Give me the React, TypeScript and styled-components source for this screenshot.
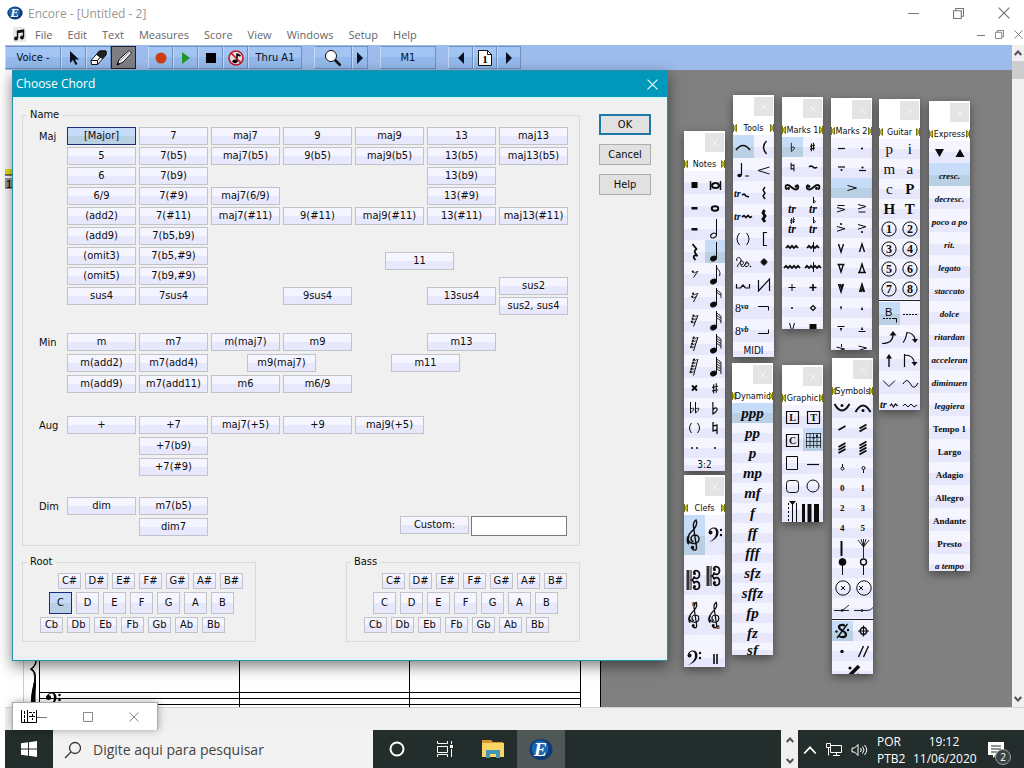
import React from "react";
import styled, { createGlobalStyle, css } from "styled-components";

const UI = `"Open Sans", "Noto Sans", sans-serif`;
const DIALOG = `"DejaVu Sans Condensed", "DejaVu Sans", sans-serif`;
const SERIF = `"Liberation Serif", serif`;

const Global = createGlobalStyle`
  *, *::before, *::after { box-sizing: border-box; }
  html, body { margin: 0; padding: 0; background: #fff; }
  body { overflow: hidden; }
  button, input { font: inherit; color: inherit; margin: 0; border-radius: 0; }
  svg { display: block; flex: none; }
`;

/* ---------- application frame ---------- */

const Screen = styled.div`
  position: relative;
  display: flex;
  flex-direction: column;
  height: 100vh;
  overflow: hidden;
  background: #fff;
  font-family: ${UI};
  font-size: 11px;
`;

const TitleBar = styled.header`
  display: flex;
  align-items: center;
  height: 26px;
  padding: 0 14px 0 7px;
  gap: 5px;
  color: #979797;
  font-size: 12px;
`;

const Spacer = styled.div`
  flex: 1;
`;

const PlainButton = styled.button`
  display: flex;
  align-items: center;
  justify-content: center;
  padding: 0;
  border: 0;
  background: transparent;
`;

const WindowButtons = styled.div`
  display: flex;
  gap: 34px;
`;

const MenuBar = styled.nav`
  display: flex;
  align-items: center;
  height: 19px;
  padding: 0 1px 2px 12px;
  gap: 15px;
  color: #666;
`;

const MenuItem = styled.button`
  padding: 0;
  border: 0;
  background: transparent;
  line-height: 16px;
`;

const MenuIcon = styled.span`
  margin-right: -7px;
`;

const MdiButtons = styled.div`
  display: flex;
  gap: 10px;
`;

const Middle = styled.div`
  flex: 1;
  display: flex;
  min-height: 0;
  padding-left: 5px;
`;

const Client = styled.div`
  flex: 1;
  display: flex;
  flex-direction: column;
  min-width: 0;
`;

const Toolbar = styled.div`
  display: flex;
  flex: none;
  height: 25px;
  gap: 12px;
  padding: 1px 0;
  background: #9dbcec;
`;

const ToolGroup = styled.div`
  display: flex;
`;

const ToolButton = styled.button<{ $w: number; $down?: boolean }>`
  display: flex;
  align-items: center;
  justify-content: center;
  width: ${(p) => p.$w}px;
  padding: 0;
  border: 1px solid #7290bd;
  border-left-color: #c5d9f7;
  background: linear-gradient(#a3c5f3 0 50%, #94baed 50%);
  color: #0a1020;
  font-family: ${DIALOG};
  font-size: 11px;
  ${(p) =>
    p.$down &&
    css`
      border-color: #222;
      background: #7d7f84;
    `}
`;

const Workspace = styled.div`
  flex: 1;
  display: flex;
  min-height: 0;
  overflow: hidden;
  background: #808080;
`;

const Sheet = styled.div`
  display: flex;
  flex-direction: column;
  justify-content: space-between;
  width: 596px;
  padding-top: 98px;
  overflow: hidden;
  border-right: 1px solid #000;
  background: #fff;
`;

const ScrollBar = styled.div`
  display: flex;
  flex-direction: column;
  align-items: stretch;
  width: 12px;
  background: #f0f0f0;
`;

const ScrollArrow = styled(PlainButton)`
  height: 16px;
`;

const ScrollThumb = styled.div`
  height: 18px;
  background: #cdcdcd;
`;

const StatusBar = styled.footer`
  flex: none;
  height: 23px;
  margin-left: 5px;
  border-top: 1px solid #d4d4d4;
  background: #f0f0f0;
`;

/* ---------- chord dialog ---------- */

const Dialog = styled.section`
  position: absolute;
  left: 12px;
  top: 70px;
  width: 656px;
  border: 1px solid #2b8ea6;
  background: #f0f0f0;
  box-shadow: 0 5px 14px rgba(0, 0, 0, 0.5);
  color: #0c0c0c;
  font-family: ${DIALOG};
  font-size: 11px;
  line-height: 14px;
`;

const DialogTitle = styled.div`
  display: flex;
  align-items: center;
  justify-content: space-between;
  height: 26px;
  padding: 0 9px 0 3px;
  background: #0099bc;
  color: #fff;
  font-family: ${UI};
  font-size: 12px;
`;

const DialogBody = styled.form`
  display: flex;
  gap: 19px;
  padding: 9px 9px 17px 8px;
  border: 1px solid #d9f6f8;
  border-top-width: 2px;
`;

const DialogMain = styled.div`
  display: flex;
  flex-direction: column;
  gap: 9px;
  width: 558px;
`;

const Box = styled.fieldset`
  min-width: 0;
  margin: 0;
  padding: 0 4px;
  border: 1px solid #dadadc;
`;

const Legend = styled.legend`
  margin: 0;
  padding: 0 3px;
`;

const Families = styled.div`
  padding: 5px 8px 9px 12px;
`;

const Family = styled.div<{ $gap: number }>`
  display: flex;
  align-items: flex-start;
  margin-top: ${(p) => p.$gap}px;
`;

const FamilyName = styled.span`
  flex: none;
  width: 28px;
  padding-top: 3px;
`;

/* Columns step by 6px; one chord button covers twelve of them. */
const ChordGrid = styled.div<{ $fine?: boolean }>`
  display: grid;
  grid-auto-columns: 3px;
  grid-auto-rows: ${(p) => (p.$fine ? 3 : 18)}px;
  gap: ${(p) => (p.$fine ? 2 : 3)}px 3px;
`;

const lilac = "linear-gradient(#f5f5ff 0 52%, #e8e8fc 52%)";
const picked = "linear-gradient(#c6dcf9 0 52%, #b9cfe4 52%)";

const keyLook = css<{ $on?: boolean }>`
  padding: 0;
  border: 1px solid ${(p) => (p.$on ? "#1b2b78" : "#c2c2cb")};
  background: ${(p) => (p.$on ? picked : lilac)};
  line-height: 14px;
  white-space: nowrap;
`;

const ChordButton = styled.button<{ $col: number; $row: number; $span: number; $on?: boolean }>`
  ${keyLook}
  grid-column: ${(p) => p.$col + 1} / span 12;
  grid-row: ${(p) => p.$row + 1} / span ${(p) => p.$span};
`;

const CustomRow = styled.div`
  display: flex;
  align-items: flex-start;
  gap: 2px;
  margin: 19px 0 0 auto;
`;

const CustomButton = styled.button`
  ${keyLook}
  width: 69px;
  height: 18px;
`;

const CustomInput = styled.input`
  width: 96px;
  height: 20px;
  border: 1px solid #7a7a7a;
  background: #fff;
`;

const Keyboards = styled.div`
  display: flex;
  justify-content: space-between;
`;

const Keys = styled.div`
  padding: 4px 8px 5px 13px;
`;

const KeyRow = styled.div<{ $indent: number }>`
  display: flex;
  gap: 4px;
  margin: 0 0 3px ${(p) => p.$indent}px;
`;

const Key = styled.button<{ $tall?: boolean; $on?: boolean }>`
  ${keyLook}
  width: 23px;
  height: ${(p) => (p.$tall ? 22 : 16)}px;
`;

const Actions = styled.div`
  display: flex;
  flex-direction: column;
  gap: 9px;
  padding-top: 6px;
`;

const Action = styled.button<{ $main?: boolean }>`
  width: 52px;
  height: 21px;
  padding: 0;
  border: ${(p) => (p.$main ? "2px solid #1f77a8" : "1px solid #adadad")};
  background: #e1e1e1;
`;

/* ---------- tool palettes ---------- */

const PaletteFrame = styled.section<{ $x: number; $y: number; $h: number }>`
  position: absolute;
  left: ${(p) => p.$x}px;
  top: ${(p) => p.$y}px;
  width: 41px;
  height: ${(p) => p.$h}px;
  overflow: hidden;
  background: #f3f3ff;
  box-shadow: 0 3px 9px rgba(0, 0, 0, 0.45);
  color: #0c0c0c;
`;

const PaletteHead = styled.div`
  display: flex;
  flex-direction: column;
  align-items: flex-end;
  height: 40px;
  padding-top: 2px;
  background: #fff;
`;

const PaletteClose = styled(PlainButton)`
  width: 19px;
  height: 19px;
  margin-right: 1px;
  background: #e4e4e4;
`;

const PaletteTitle = styled.div`
  display: flex;
  align-items: center;
  justify-content: space-between;
  width: 41px;
  height: 18px;
  padding-top: 6px;
  font-family: ${DIALOG};
  font-size: 9px;
  line-height: 12px;
  white-space: nowrap;
`;

const TitleText = styled.span`
  margin: 0 -3px;
`;

const Cells = styled.div`
  display: flex;
  flex-wrap: wrap;
`;

const Cell = styled.button<{ $h: number; $wide?: boolean; $on?: boolean }>`
  display: flex;
  align-items: center;
  justify-content: center;
  flex: 0 0 ${(p) => (p.$wide ? "100%" : "50%")};
  height: ${(p) => p.$h}px;
  min-width: 0;
  padding: 0;
  overflow: hidden;
  border: 0;
  background: ${(p) => (p.$on ? picked : "linear-gradient(#f5f5ff 0 50%, #e8e8fc 50%)")};
`;

const Divider = styled.div`
  flex: 0 0 100%;
  height: 3px;
  border-top: 1px solid #f5f5ff;
  border-bottom: 1px solid #f5f5ff;
  background: #222;
`;

type Tone = "dyn" | "words" | "tempo" | "type" | "heavy" | "small" | "ui";
const tones: Record<Tone, ReturnType<typeof css>> = {
  dyn: css`font: italic bold 15px/18px ${SERIF};`,
  words: css`padding-top: 3px; font: italic bold 9px/14px ${SERIF};`,
  tempo: css`padding-top: 3px; font: bold 9px/14px ${SERIF};`,
  type: css`font: 15px/18px ${SERIF};`,
  heavy: css`font: bold 15px/18px ${SERIF};`,
  small: css`font: bold 9px/12px ${SERIF};`,
  ui: css`font: 10px/12px ${DIALOG};`,
};

const Label = styled.span<{ $tone: Tone }>`
  display: flex;
  justify-content: safe center;
  width: 100%;
  padding: 0 2px;
  white-space: nowrap;
  ${(p) => tones[p.$tone]}
`;

/* ---------- taskbar ---------- */

const Taskbar = styled.div`
  display: flex;
  flex: none;
  height: 38px;
  margin-left: 5px;
  background: #222d2c;
  color: #fff;
`;

const TaskButton = styled(PlainButton)<{ $on?: boolean }>`
  width: 48px;
  background: ${(p) => (p.$on ? "#4f5857" : "transparent")};
`;

const Search = styled.label`
  display: flex;
  align-items: center;
  gap: 11px;
  width: 320px;
  padding: 2px 0 0 11px;
  background: #f2f2f2;
  color: #333;
`;

const SearchInput = styled.input`
  flex: 1;
  min-width: 0;
  padding: 0;
  border: 0;
  outline: 0;
  background: transparent;
  font-size: 14px;
  line-height: 20px;
  &::placeholder { color: #444; opacity: 1; }
`;

const PanelScroll = styled.div`
  display: flex;
  flex-direction: column;
  justify-content: space-between;
  align-items: center;
  width: 17px;
  padding: 6px 0 3px;
  background: #f0f0f0;
`;

const Tray = styled.div`
  display: flex;
  align-items: center;
  width: 226px;
  padding: 2px 0 0 5px;
  gap: 8px;
`;

const TrayText = styled.div<{ $w: number; $left?: boolean }>`
  width: ${(p) => p.$w}px;
  font-size: 12px;
  line-height: 17px;
  text-align: ${(p) => (p.$left ? "left" : "center")};
  white-space: nowrap;
`;

const Notice = styled(PlainButton)`
  position: relative;
  margin-left: 4px;
`;

const Badge = styled.span`
  position: absolute;
  left: 8px;
  top: 7px;
  width: 16px;
  height: 16px;
  border: 1px solid #9a9f9f;
  border-radius: 8px;
  background: #3b4444;
  color: #fff;
  font-size: 10px;
  line-height: 14px;
  text-align: center;
`;

const MiniWindow = styled.section`
  position: absolute;
  left: 12px;
  bottom: 38px;
  display: flex;
  align-items: center;
  width: 146px;
  height: 28px;
  padding: 0 18px 0 8px;
  border: 1px solid #aaa;
  border-bottom: 0;
  background: #fff;
  box-shadow: 0 0 8px rgba(0, 0, 0, 0.35);
`;

const MiniButtons = styled.div`
  display: flex;
  flex: 1;
  justify-content: space-between;
`;

/* ---------- drawings ---------- */

type ArtProps = { w?: number; h?: number; box?: string; children: React.ReactNode; sw?: number };
const Art = ({ w = 20, h = 20, box, children, sw = 1 }: ArtProps) => (
  <svg width={w} height={h} viewBox={box ?? `0 0 ${w} ${h}`} fill="none" stroke="currentColor" strokeWidth={sw} aria-hidden="true">
    {children}
  </svg>
);

const Cross = ({ size = 10, color = "#777" }) => (
  <svg width={size} height={size} viewBox="0 0 10 10" stroke={color} fill="none">
    <path d="M.5.5l9 9M9.500.5l-9 9" />
  </svg>
);

const Square = ({ size = 10, color = "#777" }) => (
  <svg width={size} height={size} viewBox="0 0 10 10" stroke={color} fill="none">
    <path d="M.5.5h9v9h-9z" />
  </svg>
);

const Restore = ({ size = 10 }) => (
  <svg width={size} height={size} viewBox="0 0 10 10" stroke="#777" fill="none">
    <path d="M.5 2.500h7v7h-7zM2.500 2.500v-2h7v7h-2" />
  </svg>
);

const Dash = ({ w = 10 }) => (
  <svg width={w} height={10} viewBox={`0 0 ${w} 10`} stroke="#777">
    <path d={`M0 5.500h${w}`} />
  </svg>
);

const Chevron = ({ up, color = "#505050", w = 8 }: { up?: boolean; color?: string; w?: number }) => (
  <svg width={w} height={w} viewBox="0 0 8 8" fill="none" stroke={color} strokeWidth={w > 8 ? 1 : 2}>
    <path d={up ? "M.7 6L4 2.500l3.300 3.500" : "M.7 2L4 5.500l3.300-3.500"} />
  </svg>
);

const Logo = ({ w, h }: { w: number; h: number }) => (
  <svg width={w} height={h} viewBox="0 0 24 24" preserveAspectRatio="none" aria-hidden="true">
    <ellipse cx="12" cy="12" rx="11.500" ry="11" fill="#0d3a78" />
    <ellipse cx="11" cy="11" rx="8.500" ry="8.500" fill="#1d66ae" />
    <text x="11.500" y="19" fill="#fff" textAnchor="middle" fontFamily="Liberation Serif, serif" fontStyle="italic" fontWeight="bold" fontSize="20">E</text>
  </svg>
);

const black = { fill: "currentColor", stroke: "none" };
const Dot = ({ x, y, r = 1.2 }: { x: number; y: number; r?: number }) => <circle cx={x} cy={y} r={r} {...black} />;

const Note = ({ flags = 0, open }: { flags?: number; open?: boolean }) => (
  <Art h={22}>
    <ellipse cx="8.500" cy="17.500" rx="3" ry="2.200" transform="rotate(-25 8.500 17.500)" fill={open ? "none" : "currentColor"} />
    <path d="M11.500 17V1" />
    {Array.from({ length: flags }, (_, i) => (
      <path key={i} d={flags === 1 ? "M11.500 2c0 4 5 4 3 10" : `M11.500 ${2.500 + i * 2.400}c1 2.500 5 1.500 4.500 6`} />
    ))}
  </Art>
);

const Rest = ({ flags }: { flags: number }) => (
  <Art h={22}>
    <path d={`M14 ${8 - flags}L9.500 ${12 + flags * 1.500}`} />
    {Array.from({ length: flags }, (_, i) => (
      <g key={i}>
        <Dot x={8.500 - i * 0.8 + flags * 0.3} y={8.500 - flags + i * 3} r={1.100} />
        <path d={`M${8.500 - i * 0.8} ${9.500 - flags + i * 3}q2 1 4.500-1`} strokeWidth=".8" />
      </g>
    ))}
  </Art>
);

const Flat = ({ small }: { small?: boolean }) => (
  <Art w={small ? 7 : 9} h={small ? 11 : 15} box="0 0 8 14" sw={1.100}>
    <path d="M2.500 1v11c2-1 4-3 4-4.500S4 6 2.500 8" />
  </Art>
);

const TrillMark = ({ top }: { top?: string }) => (
  <Art h={20}>
    <text x="10" y="16" textAnchor="middle" {...black} fontFamily="Liberation Serif, serif" fontStyle="italic" fontWeight="bold" fontSize="12">tr</text>
    {top === "b" && <path d="M10.500 0v6c3-1 2-3 0-2" />}
    {top === "#" && <path d="M9.500 1v6M11.500 0v6M8 3.500l5-1M8 5.500l5-1" strokeWidth=".8" />}
  </Art>
);

const treble = "M8 29c1 3 5 3 4.500-1L9.500 8c-.5-4 1-6 2.500-7 1.500 3 .5 6-2 9s-6 5-6 9.500c0 3 3 5 6 5s5-2 5-4.500-2-4-4-4-4 1.500-4 3.500 1.500 3 2.500 3";
const Treble = ({ eight }: { eight?: "up" | "down" }) => (
  <Art w={eight ? 17 : 20} h={eight ? 32 : 36} box="0 0 20 36" sw={1.400}>
    <path d={treble} transform="translate(0 2)" />
    <path d="M5 19c-2 2-2 6 0 8" strokeWidth="2" />
    <Dot x={8.500} y={30.500} r={1.800} />
    {eight && (
      <text x={eight === "up" ? 7 : 12} y={eight === "up" ? 7 : 35} fontSize="8" fontWeight="bold" fontFamily="Liberation Serif, serif" {...black}>8</text>
    )}
  </Art>
);

const bassPath = "M3 6c0-3 2.500-4.500 5-4.500 3 0 4.500 2 4.500 5 0 4.500-4 7.500-9.500 10 5-3.500 7-6 7-10 0-2.500-1-4-2.500-4C5.500 2.500 4 4 4 6z";
const Bass = () => (
  <Art w={18} h={18}>
    <path d={bassPath} {...black} />
    <Dot x={4.500} y={6.500} r={2} />
    <Dot x={15} y={4} />
    <Dot x={15} y={9} />
  </Art>
);

const CClef = ({ drop = 0 }: { drop?: number }) => (
  <Art w={17} h={32} box={`1 ${-5 - drop} 17 32`} sw={1.700}>
    <path d="M3 1v20" strokeWidth="3" stroke="#3c3030" />
    <path d="M6 1v20" strokeWidth="1" />
    <path d="M8.500 4c1-3.500 6-3 6 1.500s-5 5-5.500 2c0 2 0 2.500-2 3.500 2 1 2 1.500 2 3.500.5-3 5.500-2.500 5.500 2s-5 5-6 1.500" />
    <Dot x={9.500} y={4.500} r={1.500} />
    <Dot x={9.500} y={17.500} r={1.500} />
  </Art>
);

const wave = (n: number, x = 2, y = 10) => `M${x} ${y}` + "l2-2.200 2 2.200".repeat(n);
const Mordent = ({ n, bar }: { n: number; bar?: boolean }) => (
  <Art w={20} sw={1.800}>
    <path d={wave(n, 10 - n * 2, 11)} />
    {bar && <path d="M10.500 5v10" strokeWidth="1" />}
  </Art>
);

const Lines = ({ d, sw = 1, w = 20, h = 20, dots = [] as number[][], children }: { d: string; sw?: number; w?: number; h?: number; dots?: number[][]; children?: React.ReactNode }) => (
  <Art w={w} h={h} sw={sw}>
    <path d={d} />
    {dots.map(([x, y, r], i) => (
      <Dot key={i} x={x} y={y} r={r} />
    ))}
    {children}
  </Art>
);

const Fill = ({ d, w = 20, h = 20 }: { d: string; w?: number; h?: number }) => (
  <Art w={w} h={h}>
    <path d={d} {...black} />
  </Art>
);

const Ringed = ({ n }: { n: string }) => (
  <Art w={18} h={18}>
    <circle cx="9" cy="9" r="7.100" />
    <text x="9" y="13" textAnchor="middle" fontSize="12" fontWeight="bold" fontFamily="Liberation Serif, serif" {...black}>{n}</text>
  </Art>
);

const Boxed = ({ n }: { n: string }) => (
  <Art w={16} h={16}>
    <path d="M2.500 2.500h12v12h-12z" strokeWidth="1.200" />
    <text x="8.500" y="12" textAnchor="middle" fontSize="10" fontWeight="bold" fontFamily="Liberation Serif, serif" {...black}>{n}</text>
  </Art>
);

/* ---------- palette contents ---------- */

type Item = {
  name: string;
  art?: React.ReactNode;
  text?: string;
  tone?: Tone;
  h: number;
  wide?: boolean;
  on?: boolean;
  rule?: boolean;
};

const art = (h: number, name: string, node: React.ReactNode, on = false): Item => ({ name, art: node, h, on });
const txt = (h: number, text: string, tone: Tone, wide = false, on = false): Item => ({ name: text, text, tone, h, wide, on });
const rule: Item = { name: "rule", h: 3, rule: true };

const sharpPath = "M8.500 5v11M11.500 4v11M6.500 9l7-1.500M6.500 13l7-1.500";
const naturalPath = "M8 4v9l4-1M12 16V7L8 8";
const accent = "M5.500 7.500l9 2.500-9 2.500";

const notes: Item[] = [
  art(23, "breve rest", <Fill d="M7.500 9h6v6h-6z" />),
  art(23, "breve", <Lines d="M5.500 8v9M15.500 8v9" sw={1.500}><ellipse cx="10.500" cy="12.500" rx="3.500" ry="2.500" strokeWidth="2" /></Lines>),
  art(23, "whole rest", <Fill d="M7.500 11h6v2.500h-6z" />),
  art(23, "whole note", <Lines d=""><ellipse cx="10" cy="12.500" rx="3.200" ry="2.300" strokeWidth="2" /></Lines>),
  art(23, "half rest", <Fill d="M7.500 9h6v2.500h-6z" />),
  art(23, "half note", <Note open />),
  art(23, "quarter rest", <Lines sw={1.800} d="M8.500 2l4 5c-3 2-2 3.500 1 7-4-2-5 1-2 4" />),
  art(23, "quarter note", <Note />, true),
  ...[1, 2, 3, 4, 5].flatMap((n) => [art(23, `rest ${n}`, <Rest flags={n} />), art(23, `note ${n}`, <Note flags={n} />)]),
  art(20, "double sharp", <Lines sw={2} d="M8 7.500l5 5M13 7.500l-5 5" />),
  art(20, "sharp", <Art w={12} h={14} box="3 2 14 15" sw={1.300}><path d={sharpPath} /></Art>),
  art(20, "double flat", <Lines d="M6.500 4v11c5-4 4-6 0-4M11.500 4v11c5-4 4-6 0-4" />),
  art(20, "flat", <Flat />),
  art(20, "parentheses", <Lines d="M7.500 5q-4 5 0 10M13.500 5q4 5 0 10" />),
  art(20, "natural", <Lines sw={1.300} d={naturalPath} />),
  art(20, "two dots", <Lines d="" dots={[[8, 10, 1], [13, 10, 1]]} />),
  art(20, "dot", <Lines d="" dots={[[10, 10, 1]]} />),
  txt(14, "3:2", "ui", true),
];

const trText = <text x="1" y="14" {...black} fontSize="10" fontWeight="bold" fontStyle="italic" fontFamily="Liberation Serif, serif">tr</text>;
const Octave = ({ s }: { s: string }) => (
  <Art>
    <text x="2" y="14" {...black} fontSize="12" fontFamily="Liberation Serif, serif">8</text>
    <text x="8" y="11" {...black} fontSize="8" fontWeight="bold" fontStyle="italic" fontFamily="Liberation Serif, serif">{s}</text>
  </Art>
);

const tools: Item[] = [
  art(23, "slur", <Lines sw={1.600} d="M3 13q7-9 14 0" />, true),
  art(23, "bracket slur", <Lines sw={1.400} d="M12.500 4q-6 6 0 13" />),
  art(23, "tenuto note", <Lines d="M8.500 3v12M12 16h4" sw={1.200}><ellipse cx="6.500" cy="15.500" rx="2.200" ry="1.700" {...black} /></Lines>),
  art(23, "hairpin", <Lines d="M15.500 7L4 10.500 15.500 14" />),
  art(23, "trill", <Lines sw={1.600} d="M9 12l2-1 2 2 3 1">{trText}</Lines>),
  art(23, "arpeggio", <Lines sw={1.400} d="M11 4l-2 3 2 3-2 3 2 3" />),
  art(23, "long trill", <Lines sw={1.600} d="M9 11l2-1.500 2 2 2-2 2 2 2-1">{trText}</Lines>),
  art(23, "heavy arpeggio", <Lines sw={2.800} d="M10.500 4l-1.500 3 2 3-2 3 2 3" />),
  art(23, "parentheses", <Lines d="M6.500 4q-5 6 0 12M13.500 4q5 6 0 12" />),
  art(23, "bracket", <Lines sw={1.200} d="M13 3.500H9.500v13H13" />),
  art(23, "pedal", <Lines d="M4 9c-2-4 4-5 4-1s-5 4-3 7M8 13c3 0 3-4 1-4-3 0-2 6 1 5.500s2-5.500 4-4.500c3 1 2 5-1 4.500s0-5 2-3" dots={[[17.500, 14.500, 0.8]]} />),
  art(23, "pedal release", <Lines sw={1.700} d="M10 6.500v7M6.500 10h7M7.800 7.800l4.400 4.400M12.200 7.800l-4.400 4.400" />),
  art(23, "pedal line", <Lines d="M3.500 9v4h4l2.500-3 2.500 3h4V9" sw={1.200} />),
  art(23, "line", <Lines d="M4.500 5v11L15.500 4v12" sw={1.200} />),
  art(23, "8va", <Octave s="va" />),
  art(23, "8va line", <Lines d="M4 8.500h10.500v4" />),
  art(23, "8vb", <Octave s="vb" />),
  art(23, "8vb line", <Lines d="M4 12.500h10.500v-4" />),
  txt(17, "MIDI", "ui", true),
];

const turn = (flip: boolean) => (
  <Art sw={1.800}>
    <path transform={flip ? "matrix(-1 0 0 1 20 0)" : undefined} d="M5 12.500c-2-1-2-4.500.5-4.500 3 0 5 4.500 8 4.500 3.500 0 3.500-4 1-4.500" />
    <Dot x={flip ? 13.500 : 6.500} y={11.500} r={1.400} />
    <Dot x={flip ? 6 : 14} y={9.500} r={1.400} />
  </Art>
);

const marks1: Item[] = [
  art(20, "flat", <Flat small />, true),
  art(20, "sharp", <Art w={9} h={10} box="5 3 10 14" sw={1.500}><path d={sharpPath} /></Art>),
  art(20, "natural", <Art w={9} h={10} box="5 3 10 14" sw={1.500}><path d={naturalPath} /></Art>),
  art(20, "tilde", <Lines sw={1.600} d="M6 10q2-2 4 0t4 0" />),
  art(20, "turn", turn(false)),
  art(20, "inverted turn", turn(true)),
  art(20, "tr", <TrillMark />),
  art(20, "tr flat", <TrillMark top="b" />),
  art(20, "tr sharp", <TrillMark top="#" />),
  art(20, "tr natural", <TrillMark top="b" />),
  art(20, "short mordent", <Mordent n={3} />),
  art(20, "barred mordent", <Mordent n={3} bar />),
  art(20, "long mordent", <Mordent n={4} />),
  art(20, "long barred mordent", <Mordent n={4} bar />),
  art(20, "plus", <Lines d="M10 7v7M6.500 10.500h7" />),
  art(20, "heavy plus", <Lines sw={1.600} d="M10 7v7M6.500 10.500h7" />),
  art(20, "dot", <Lines d="" dots={[[10, 11, 1]]} />),
  art(20, "diamond", <Lines d="M10 8.500l2.500 2.500-2.500 2.500L7.500 11z" sw={1.200} />),
  art(20, "up bow", <Lines d="M7.500 6l2.500 9 2.500-9" />),
  art(20, "down bow", <Fill d="M6.500 7h7v5h-7z" />),
];

const wedge = (up: boolean, extra = "") => <Lines sw={1.400} d={(up ? "M7.500 14L10 6l2.500 8" : "M7.500 6l2.500 8 2.500-8") + extra} />;

const marks2: Item[] = [
  art(20, "tenuto", <Lines sw={1.200} d="M7 10.500h7" />),
  art(20, "staccato", <Lines d="" dots={[[10, 10.500, 1.100]]} />),
  art(20, "tenuto dot", <Lines sw={1.200} d="M7 9h7" dots={[[10.500, 12, 1.100]]} />),
  art(20, "dot tenuto", <Lines sw={1.200} d="M7 12.500h7" dots={[[10.500, 9.500, 1.100]]} />),
  { name: "accent", art: <Lines d={accent} />, h: 20, wide: true, on: true },
  art(20, "accent line", <Lines d="M6.500 7.500h7M6 9.500l8 2-8 2.500" />),
  art(20, "accent under line", <Lines d="M6 6.500l8 2-8 2.500M6.500 14h7" />),
  art(20, "accent dot", <Lines d="M6 8.500l8 2.200-8 2.500" dots={[[10, 6, 1.100]]} />),
  art(20, "accent under dot", <Lines d="M6 6.500l8 2.200-8 2.500" dots={[[10, 14, 1.100]]} />),
  art(20, "wedge down", wedge(false)),
  art(20, "wedge up", wedge(true)),
  art(20, "lined wedge down", wedge(false, "M6.500 6.500h7")),
  art(20, "lined wedge up", wedge(true, "M6 14.500h8")),
  art(20, "heavy wedge down", wedge(false, "M9 6l1.500 4 1-4")),
  art(20, "heavy wedge up", wedge(true, "M9 14l1.500-4 1 4")),
  art(20, "small wedge down", <Fill d="M8.800 8.500h2.400L10 12z" />),
  art(20, "small wedge up", <Fill d="M8.800 12h2.400L10 8.500z" />),
  art(20, "line wedge down", <Lines d="M6.500 8.500h7"><path d="M8.800 10h2.400L10 13.500z" {...black} /></Lines>),
  art(20, "line wedge up", <Lines d="M6.500 13.500h7"><path d="M8.800 12h2.400L10 8.500z" {...black} /></Lines>),
  art(20, "accent wedge", <Lines d="M5.500 9l8 2-8 2.500M10.500 6v3" />),
  art(20, "accent small", <Lines d="M6.500 8l8 2-8 2.500" />),
];

const guitar: Item[] = [
  txt(20, "p", "type"), txt(20, "i", "type"),
  txt(20, "m", "type"), txt(20, "a", "type"),
  txt(20, "c", "type"), txt(20, "P", "heavy"),
  txt(20, "H", "heavy"), txt(20, "T", "heavy"),
  ...["1", "2", "3", "4", "5", "6", "7", "8"].map((n) => art(20, n, <Ringed n={n} />)),
  rule,
  art(23, "barre", <Art><text x="6" y="12" {...black} fontSize="11" fontFamily="Liberation Sans, sans-serif">B</text><path d="M4 14.500h12" strokeDasharray="2 1" /><path d="M14 14.500h3.500v4" /></Art>, true),
  art(23, "dashes", <Lines d=""><path d="M3 10.500h15" strokeDasharray="2 1" /></Lines>),
  art(23, "bend", <Lines sw={1.200} d="M3 16.500q11 0 11-9"><path d="M10.500 8.500l3.500-4.500 3.500 4.500z" {...black} /></Lines>),
  art(23, "bend release", <Lines sw={1.200} d="M3 15.500c2-2 3-5 4-10 5 0 8 4 8 7"><path d="M12 12h6l-3 4z" {...black} /></Lines>),
  art(23, "prebend", <Lines sw={1.400} d="M10 17V7"><path d="M7 8.500L10 4l3 4.500z" {...black} /></Lines>),
  art(23, "prebend release", <Lines sw={1.200} d="M4.500 4v13M4.500 5q9 0 10 8"><path d="M11.500 12h6l-3 4z" {...black} /></Lines>),
  art(23, "dip", <Lines d="M4 7.500l6 6 6-6" />),
  art(23, "vibrato", <Lines d="M3 11q4-7 7.500 0t7.500-1" />),
  art(20, "tr line", <Lines sw={1.200} d="M11 12l1.500-2 2 3 2-3 2 2">{trText}</Lines>),
  art(20, "wavy line", <Lines d="M3 12l2-2 3 3 3-3 3 3 3-2" />),
];

const express: Item[] = [
  art(22, "down", <Fill d="M6 7h9l-4.500 8z" />),
  art(22, "up", <Fill d="M5.500 15h9L10 7z" />),
  txt(23, "cresc.", "words", true, true),
  ...["decresc.", "poco a po", "rit.", "legato", "staccato", "dolce", "ritardan", "acceleran", "diminuen", "leggiera"].map((t) => txt(23, t, "words", true)),
  ...["Tempo 1", "Largo", "Adagio", "Allegro", "Andante", "Presto"].map((t) => txt(23, t, "tempo", true)),
  txt(21, "a tempo", "words", true),
];

const clefs: Item[] = [
  art(40, "treble clef", <Treble />, true), art(40, "bass clef", <Bass />),
  art(40, "alto clef", <CClef drop={5} />), art(40, "tenor clef", <CClef drop={1} />),
  art(40, "treble 8va", <Treble eight="up" />), art(40, "treble 8vb", <Treble eight="down" />),
  art(46, "bass 8vb", <Bass />), art(46, "percussion clef", <Lines sw={1.600} d="M9 6v10M12 6v10" />),
];

const dynamics: Item[] = ["ppp", "pp", "p", "mp", "mf", "f", "ff", "fff", "sfz", "sffz", "fp", "fz", "sf"].map((t, i) => txt(i === 12 ? 14 : 20, t, "dyn", true, i === 0));

const graphic: Item[] = [
  art(23, "L", <Boxed n="L" />), art(23, "T", <Boxed n="T" />),
  art(23, "C", <Boxed n="C" />),
  art(23, "chord grid", <Lines w={18} h={20} sw={0.700} d="M2 3.500h15M2 7.500h15M2 11.500h15M2 15.500h15M2.500 3v15M6 3v15M9.500 3v15M13 3v15M16.500 3v15" dots={[[9.500, 8, 1.100], [13, 6, 1.100]]} />, true),
  art(23, "rectangle", <Lines w={16} h={16} d="M2.500 1.500h11v13h-11z" />),
  art(23, "line", <Lines d="M4 11.500h12" sw={1.200} />),
  art(23, "round rectangle", <Art w={16} h={16}><rect x="2.500" y="2.500" width="12" height="12" rx="3" /></Art>),
  art(23, "ellipse", <Art w={16} h={16}><circle cx="8" cy="8" r="6" /></Art>),
  { name: "line weight", h: 27, wide: true, art: <Art w={40} h={24}><path d="M5.500 4v18" strokeDasharray="2 2" /><path d="M6 2h7l-3.500 4z" {...black} /><path d="M9.500 4v20M13.500 4v20" /><path d="M20.500 5v19" strokeWidth="3" /><path d="M26.500 5v19" strokeWidth="4" /><path d="M33.500 5v19" strokeWidth="5" /></Art> },
];

const slashes = (n: number) => <Lines sw={1.800} d={Array.from({ length: n }, (_, i) => `M6.500 ${12 + (n - 1) * 1.500 - i * 3}l7-4`).join("")} />;

const symbols: Item[] = [
  art(20, "fermata below", <Lines sw={2} d="M2.500 6q7.500 13 15 0" dots={[[10, 7.500, 1.500]]} />),
  art(20, "fermata", <Lines sw={2} d="M2.500 14q7.500-13 15 0" dots={[[10, 12.500, 1.500]]} />),
  art(20, "slash", slashes(1)), art(20, "two slashes", slashes(2)),
  art(20, "three slashes", slashes(3)), art(20, "four slashes", slashes(4)),
  art(20, "thumb", <Lines d="M10.500 6v3" sw={1}><circle cx="10.500" cy="10.500" r="1.500" /></Lines>),
  art(20, "thumb below", <Lines d="M10.500 12v3" sw={1}><circle cx="10.500" cy="10" r="1.500" /></Lines>),
  ...["0", "1", "2", "3", "4", "5"].map((t) => txt(20, t, "small")),
  art(20, "stick", <Lines sw={2} d="M9.500 3v15" />),
  art(20, "brush", <Lines d="M10.500 8v12M10.500 9L5 2M10.500 9L8 1M10.500 9V1M10.500 9L13 1M10.500 9L16 2" sw={0.900} />),
  art(20, "mallet", <Lines d="M10.500 0v17" dots={[[10.500, 4, 3.800]]} />),
  art(20, "soft mallet", <Lines d="M10.500 7v10"><circle cx="10.500" cy="4" r="3" strokeWidth="1.400" /></Lines>),
  art(20, "drum centre", <Art><circle cx="11" cy="10" r="7.200" /><path d="M9 8l4 4M13 8l-4 4" /></Art>),
  art(20, "drum edge", <Art><circle cx="11" cy="10" r="7.200" /><path d="M6 8l4 4M10 8l-4 4" /></Art>),
  art(20, "rim open", <Lines d="M2 12.500h15M11 12l6-5" sw={0.900} dots={[[10, 12.500, 1.200]]} />),
  art(20, "rim closed", <Lines d="M1 12.500h13q4 0 6-3" sw={0.900} dots={[[9, 12.500, 1.200]]} />),
  rule,
  art(20, "segno", <Lines sw={2.200} d="M13 5c-2.500-2-6.500-1-6 1.500.5 3 7 3.500 7 7 0 3-4.500 3.500-7 1.500" dots={[[4.500, 10.500, 1.200], [16, 9, 1.200]]}><path d="M15.500 3L5 17" strokeWidth="1.300" /></Lines>, true),
  art(20, "coda", <Lines d="M10.500 4.500v11M5 10h11" sw={1.200}><ellipse cx="10.500" cy="10" rx="3.200" ry="3.500" strokeWidth="1.600" /></Lines>),
  art(20, "dot", <Lines d="" dots={[[10, 10.500, 1.700]]} />),
  art(20, "caesura", <Lines d="M5.500 16l5-11M10.500 16l5-11" sw={1.400} />),
  { name: "repeat bar", h: 20, wide: true, art: <Lines sw={3.500} d="M15 16L26 5" w={40} dots={[[17, 7, 1.600], [25, 14, 1.600]]} /> },
];

const Palette = ({ title, x, y, h, items }: { title: string; x: number; y: number; h: number; items: Item[] }) => (
  <PaletteFrame $x={x} $y={y} $h={h} aria-label={title}>
    <PaletteHead>
      <PaletteClose aria-label="Close"><Cross size={6} color="#fff" /></PaletteClose>
      <PaletteTitle>
        <svg width="4" height="8" viewBox="0 0 4 8" stroke="#77780c" fill="#c8c832"><path d="M3.500.5v7L.5 4zM.5 0v8" /></svg>
        <TitleText>{title}</TitleText>
        <svg width="4" height="8" viewBox="0 0 4 8" stroke="#77780c" fill="#c8c832"><path d="M.5.5v7L3.500 4zM3.500 0v8" /></svg>
      </PaletteTitle>
    </PaletteHead>
    <Cells>
      {items.map((it, i) =>
        it.rule ? (
          <Divider key={i} />
        ) : (
          <Cell key={i} type="button" $h={it.h} $wide={it.wide} $on={it.on} aria-label={it.name}>
            {it.art ?? <Label $tone={it.tone ?? "ui"}>{it.text}</Label>}
          </Cell>
        )
      )}
    </Cells>
  </PaletteFrame>
);

/* ---------- chord tables: [label, column step, row step] ---------- */

type Chord = [string, number, number];
const column = (c: number, names: (string | null)[], step: number): Chord[] =>
  names.flatMap((n, i) => (n ? [[n, c * 12, i * step] as Chord] : []));

const maj: Chord[] = [
  ...column(0, ["[Major]", "5", "6", "6/9", "(add2)", "(add9)", "(omit3)", "(omit5)", "sus4"], 4),
  ...column(1, ["7", "7(b5)", "7(b9)", "7(#9)", "7(#11)", "7(b5,b9)", "7(b5,#9)", "7(b9,#9)", "7sus4"], 4),
  ...column(2, ["maj7", "maj7(b5)", null, "maj7(6/9)", "maj7(#11)"], 4),
  ...column(3, ["9", "9(b5)", null, null, "9(#11)", null, null, null, "9sus4"], 4),
  ...column(4, ["maj9", "maj9(b5)", null, null, "maj9(#11)"], 4),
  ["11", 53, 25],
  ...column(5, ["13", "13(b5)", "13(b9)", "13(#9)", "13(#11)", null, null, null, "13sus4"], 4),
  ...column(6, ["maj13", "maj13(b5)", null, null, "maj13(#11)"], 4),
  ["sus2", 72, 30],
  ["sus2, sus4", 72, 34],
];
const min: Chord[] = [
  ...column(0, ["m", "m(add2)", "m(add9)"], 1),
  ...column(1, ["m7", "m7(add4)", "m7(add11)"], 1),
  ["m(maj7)", 24, 0], ["m9", 36, 0], ["m13", 60, 0],
  ["m9(maj7)", 30, 1], ["m11", 54, 1],
  ["m6", 24, 2], ["m6/9", 36, 2],
];
const aug: Chord[] = [
  ["+", 0, 0], ...column(1, ["+7", "+7(b9)", "+7(#9)"], 1),
  ["maj7(+5)", 24, 0], ["+9", 36, 0], ["maj9(+5)", 48, 0],
];
const dim: Chord[] = [["dim", 0, 0], ...column(1, ["m7(b5)", "dim7"], 1)];

const Chords = ({ list, fine }: { list: Chord[]; fine?: boolean }) => (
  <ChordGrid $fine={fine}>
    {list.map(([name, c, r]) => (
      <ChordButton key={name} type="button" $col={c} $row={r} $span={fine ? 4 : 1} $on={name === "[Major]"}>{name}</ChordButton>
    ))}
  </ChordGrid>
);

const letters = ["C", "D", "E", "F", "G", "A", "B"];
const Keyboard = ({ title, on }: { title: string; on?: string }) => (
  <Box>
    <Legend>{title}</Legend>
    <Keys>
      <KeyRow $indent={18}>{letters.map((l) => <Key key={l} type="button">{l}#</Key>)}</KeyRow>
      <KeyRow $indent={9}>{letters.map((l) => <Key key={l} type="button" $tall $on={l === on}>{l}</Key>)}</KeyRow>
      <KeyRow $indent={0}>{letters.map((l) => <Key key={l} type="button">{l}b</Key>)}</KeyRow>
    </Keys>
  </Box>
);

const ChordDialog = () => (
  <Dialog role="dialog" aria-label="Choose Chord">
    <DialogTitle>
      Choose Chord
      <PlainButton aria-label="Close"><Cross size={11} color="#fff" /></PlainButton>
    </DialogTitle>
    <DialogBody onSubmit={(e) => e.preventDefault()}>
      <DialogMain>
        <Box>
          <Legend>Name</Legend>
          <Families>
            <Family $gap={0}><FamilyName>Maj</FamilyName><Chords list={maj} fine /></Family>
            <Family $gap={18}><FamilyName>Min</FamilyName><Chords list={min} /></Family>
            <Family $gap={23}><FamilyName>Aug</FamilyName><Chords list={aug} /></Family>
            <Family $gap={21}>
              <FamilyName>Dim</FamilyName>
              <Chords list={dim} />
              <CustomRow>
                <CustomButton type="button">Custom:</CustomButton>
                <CustomInput aria-label="Custom" />
              </CustomRow>
            </Family>
          </Families>
        </Box>
        <Keyboards>
          <Keyboard title="Root" on="C" />
          <Keyboard title="Bass" />
        </Keyboards>
      </DialogMain>
      <Actions>
        <Action type="submit" $main>OK</Action>
        <Action type="button">Cancel</Action>
        <Action type="button">Help</Action>
      </Actions>
    </DialogBody>
  </Dialog>
);

const triRight = <Fill w={10} h={14} d="M2 1l6 6-6 6z" />;
const triLeft = <Fill w={10} h={14} d="M8 1L2 7l6 6z" />;

export default function App() {
  return (
    <>
      <Global />
      <Screen>
        <TitleBar>
          <Logo w={16} h={14} />
          <span>Encore - [Untitled - 2]</span>
          <Spacer />
          <WindowButtons>
            <PlainButton aria-label="Minimize"><Dash w={11} /></PlainButton>
            <PlainButton aria-label="Restore"><Restore size={11} /></PlainButton>
            <PlainButton aria-label="Close"><Cross size={12} /></PlainButton>
          </WindowButtons>
        </TitleBar>
        <MenuBar>
          <MenuIcon>
            <svg width="15" height="15" viewBox="0 0 15 15">
              <path d="M1 0h10l3 3v12H1z" fill="#e9e9e9" />
              <path d="M5.500 11V4l6-1v7M5.500 5.500l6-1" stroke="#111" strokeWidth="1.400" fill="none" />
              <circle cx="4" cy="11.500" r="1.900" fill="#111" /><circle cx="10" cy="10.500" r="1.900" fill="#111" />
            </svg>
          </MenuIcon>
          {["File", "Edit", "Text", "Measures", "Score", "View", "Windows", "Setup", "Help"].map((m) => <MenuItem key={m}>{m}</MenuItem>)}
          <Spacer />
          <MdiButtons>
            <PlainButton aria-label="Minimize document"><Dash w={8} /></PlainButton>
            <PlainButton aria-label="Restore document"><Restore size={9} /></PlainButton>
            <PlainButton aria-label="Close document"><Cross size={9} /></PlainButton>
          </MdiButtons>
        </MenuBar>
        <Middle>
          <Client>
            <Toolbar>
              <ToolGroup>
                <ToolButton $w={56}>Voice -</ToolButton>
                <ToolButton $w={25} aria-label="Select"><Fill w={16} h={16} d="M4 1v12l3-3 2.500 5 2-1L9 9.500h4z" /></ToolButton>
                <ToolButton $w={25} aria-label="Erase">
                  <svg width="18" height="16" viewBox="0 0 18 16" stroke="#111" strokeLinejoin="round"><path d="M1 10.500l8.500-9.500h6.500l-8.500 9.500z" fill="#fff" /><path d="M1 10.500h6.500v4H1.500zM7.500 10.500L16 1v4l-8.500 9.500z" fill="#fff" /><path d="M9.500 1H16v4l-3.500 3.500-6-4z" fill="#222" /></svg>
                </ToolButton>
                <ToolButton $w={25} $down aria-label="Pencil">
                  <svg width="18" height="18" viewBox="0 0 18 18" stroke="#111" fill="#fff"><path d="M2 16l2.500-6L14 1.500 16.500 4 8 13z" /><path d="M5 12L14.500 3" stroke="#777" /><path d="M2 16l1-2.500L4.500 15z" fill="#111" /></svg>
                </ToolButton>
              </ToolGroup>
              <ToolGroup>
                <ToolButton $w={25} aria-label="Record"><svg width="12" height="12"><circle cx="6" cy="6" r="5.500" fill="#cf3c15" /></svg></ToolButton>
                <ToolButton $w={25} aria-label="Play"><svg width="10" height="12"><path d="M1 0l8 6-8 6z" fill="#23962b" /></svg></ToolButton>
                <ToolButton $w={25} aria-label="Stop"><svg width="10" height="10"><path d="M0 0h10v10H0z" fill="#000" /></svg></ToolButton>
                <ToolButton $w={25} aria-label="Mute">
                  <svg width="16" height="16" viewBox="0 0 16 16" fill="none"><circle cx="8" cy="8" r="7" stroke="#c01822" strokeWidth="1.600" fill="#e9dce0" /><path d="M9 3.500V11M9 4l3.500 2" stroke="#000" strokeWidth="1.600" /><ellipse cx="7" cy="11.300" rx="2.600" ry="1.900" fill="#000" /><path d="M3 3l10 10" stroke="#c01822" strokeWidth="1.600" /></svg>
                </ToolButton>
                <ToolButton $w={54}>Thru A1</ToolButton>
              </ToolGroup>
              <ToolGroup>
                <ToolButton $w={38} aria-label="Zoom">
                  <svg width="18" height="18" viewBox="0 0 18 18" stroke="#111" fill="#fff"><path d="M10.500 10.500l6 6" strokeWidth="2.500" /><circle cx="7" cy="7" r="5.500" /></svg>
                </ToolButton>
                <ToolButton $w={16} aria-label="Zoom menu">{triRight}</ToolButton>
              </ToolGroup>
              <ToolGroup>
                <ToolButton $w={56}>M1</ToolButton>
              </ToolGroup>
              <ToolGroup>
                <ToolButton $w={25} aria-label="Previous page">{triLeft}</ToolButton>
                <ToolButton $w={24} aria-label="Page">
                  <svg width="14" height="16" viewBox="0 0 14 16"><path d="M.5.5h9l4 4v11H.5z" fill="#fff" stroke="#111" /><path d="M9.500.5v4h4" fill="none" stroke="#111" /><text x="7" y="13" textAnchor="middle" fontSize="11" fontFamily="Liberation Serif, serif" fontWeight="bold">1</text></svg>
                </ToolButton>
                <ToolButton $w={24} aria-label="Next page">{triRight}</ToolButton>
              </ToolGroup>
            </Toolbar>
            <Workspace>
              <Sheet>
                <svg width="20" height="22" viewBox="0 0 20 22">
                  <path d="M0 1h20v6H0z" fill="#e6e615" />
                  <path d="M0 7h20" stroke="#000" />
                  <path d="M0 10h20v11H0z" fill="#9a9a9a" />
                  <text x="1" y="20" fontSize="11" fontFamily="Liberation Sans, sans-serif">1</text>
                </svg>
                <svg width="595" height="60" viewBox="0 0 595 60" fill="none" stroke="#000">
                  <path d="M18.500 0v60" stroke="#ccc" />
                  <path d="M34.500 0v60M234.500 0v60M404.500 0v60M575.500 0v60M34 45.500h542M34 51.500h542M34 57.500h542" />
                  <path d="M30 8c3 8-1 12-4 14 5 3 5 8 3 16s-3 14 0 22" strokeWidth="1.500" />
                  <path d="M28 26c4 8-3 18-2 34h5c-2-16 3-26-3-34z" fill="#000" stroke="none" />
                  <g transform="translate(39 44)" fill="#000" stroke="none">
                    <path d={bassPath} /><circle cx="4.500" cy="6.500" r="2.500" /><circle cx="15.500" cy="4" r="1.300" /><circle cx="15.500" cy="9" r="1.300" />
                  </g>
                </svg>
              </Sheet>
            </Workspace>
          </Client>
          <ScrollBar>
            <ScrollArrow aria-label="Scroll up"><Chevron up /></ScrollArrow>
            <ScrollThumb />
            <Spacer />
            <ScrollArrow aria-label="Scroll down"><Chevron /></ScrollArrow>
          </ScrollBar>
        </Middle>
        <StatusBar />
        <Taskbar>
          <TaskButton aria-label="Start">
            <svg width="16" height="16" viewBox="0 0 16 16" fill="#fff"><path d="M0 2.300l7-1v6.200H0zM8 1.200L16 0v7.500H8zM0 8.500h7v6.200l-7-1zM8 8.500h8V16l-8-1.200z" /></svg>
          </TaskButton>
          <Search>
            <svg width="18" height="18" viewBox="0 0 18 18" fill="none" stroke="#333" strokeWidth="1.300"><circle cx="11" cy="7" r="5.500" /><path d="M7 11l-6 6" /></svg>
            <SearchInput placeholder="Digite aqui para pesquisar" aria-label="Digite aqui para pesquisar" />
          </Search>
          <TaskButton aria-label="Cortana"><svg width="16" height="16"><circle cx="8" cy="8" r="6.500" fill="none" stroke="#fff" strokeWidth="2" /></svg></TaskButton>
          <TaskButton aria-label="Task view">
            <svg width="18" height="16" viewBox="0 0 18 16" fill="none" stroke="#fff"><path d="M1.500 0v2.500h10V0M1.500 5.500h10v6h-10zM1.500 16v-2.500h10V16M15.500 0v3M15.500 8v8" /><path d="M14 4h3v3h-3z" fill="#fff" stroke="none" /></svg>
          </TaskButton>
          <TaskButton aria-label="Explorer">
            <svg width="22" height="18" viewBox="0 0 22 18"><path d="M0 0h9l2 2h10v4H0z" fill="#d99a2b" /><path d="M0 3h22v14H0z" fill="#fbd667" /><path d="M4 18v-8h14v8h-4v-4H8v4z" fill="#4496b8" /></svg>
          </TaskButton>
          <TaskButton $on aria-label="Encore"><Logo w={24} h={23} /></TaskButton>
          <Spacer />
          <PanelScroll>
            <Chevron up />
            <Chevron />
          </PanelScroll>
          <Tray>
            <PlainButton aria-label="Show hidden icons"><Chevron up color="#fff" w={14} /></PlainButton>
            <PlainButton aria-label="Network">
              <svg width="18" height="16" viewBox="0 0 18 16" fill="none" stroke="#fff"><path d="M5.500 3.500h11v7h-11zM8 13.500h7M11.500 10.500v3M1.500 1.500h4v4h-4zM3.500 5.500v8" /></svg>
            </PlainButton>
            <PlainButton aria-label="Volume">
              <svg width="18" height="14" viewBox="0 0 18 14" fill="none" stroke="#fff"><path d="M1 5h2.500L7 1.500v11L3.500 9H1zM9.500 5q1.500 2 0 4M11.500 3.500q3 3.500 0 7M13.500 2q4.500 5 0 10" /></svg>
            </PlainButton>
            <TrayText $w={28} $left>POR<br />PTB2</TrayText>
            <TrayText $w={62}>19:12<br />11/06/2020</TrayText>
            <Notice aria-label="Notifications">
              <svg width="18" height="16" viewBox="0 0 18 16"><path d="M1 0h16v13h-8l-3 3v-3H1z" fill="#fff" /><path d="M4 4h10M4 7h10M4 10h6" stroke="#222d2c" /></svg>
              <Badge>2</Badge>
            </Notice>
          </Tray>
        </Taskbar>

        <Palette title="Notes" x={684} y={131} h={340} items={notes} />
        <Palette title="Clefs" x={684} y={475} h={192} items={clefs} />
        <Palette title="Tools" x={733} y={95} h={262} items={tools} />
        <Palette title="Dynamic" x={732} y={363} h={292} items={dynamics} />
        <Palette title="Marks 1" x={782} y={97} h={232} items={marks1} />
        <Palette title="Graphic" x={782} y={365} h={157} items={graphic} />
        <Palette title="Marks 2" x={831} y={98} h={252} items={marks2} />
        <Palette title="Symbols" x={832} y={358} h={316} items={symbols} />
        <Palette title="Guitar" x={879} y={99} h={311} items={guitar} />
        <Palette title="Express" x={929} y={101} h={470} items={express} />

        <ChordDialog />

        <MiniWindow>
          <svg width="16" height="13" viewBox="0 0 16 13" fill="none" stroke="#000"><path d="M.5 0v12.500h15V0M6.500 0v13" /><path d="M3.500 1v11M8 2.500h6M8 6.500h6M11.500 4v6" strokeDasharray="3 1" /></svg>
          <MiniButtons>
            <PlainButton aria-label="Minimize"><Dash w={10} /></PlainButton>
            <PlainButton aria-label="Maximize"><Square color="#888" /></PlainButton>
            <PlainButton aria-label="Close"><Cross color="#888" /></PlainButton>
          </MiniButtons>
        </MiniWindow>
      </Screen>
    </>
  );
}
